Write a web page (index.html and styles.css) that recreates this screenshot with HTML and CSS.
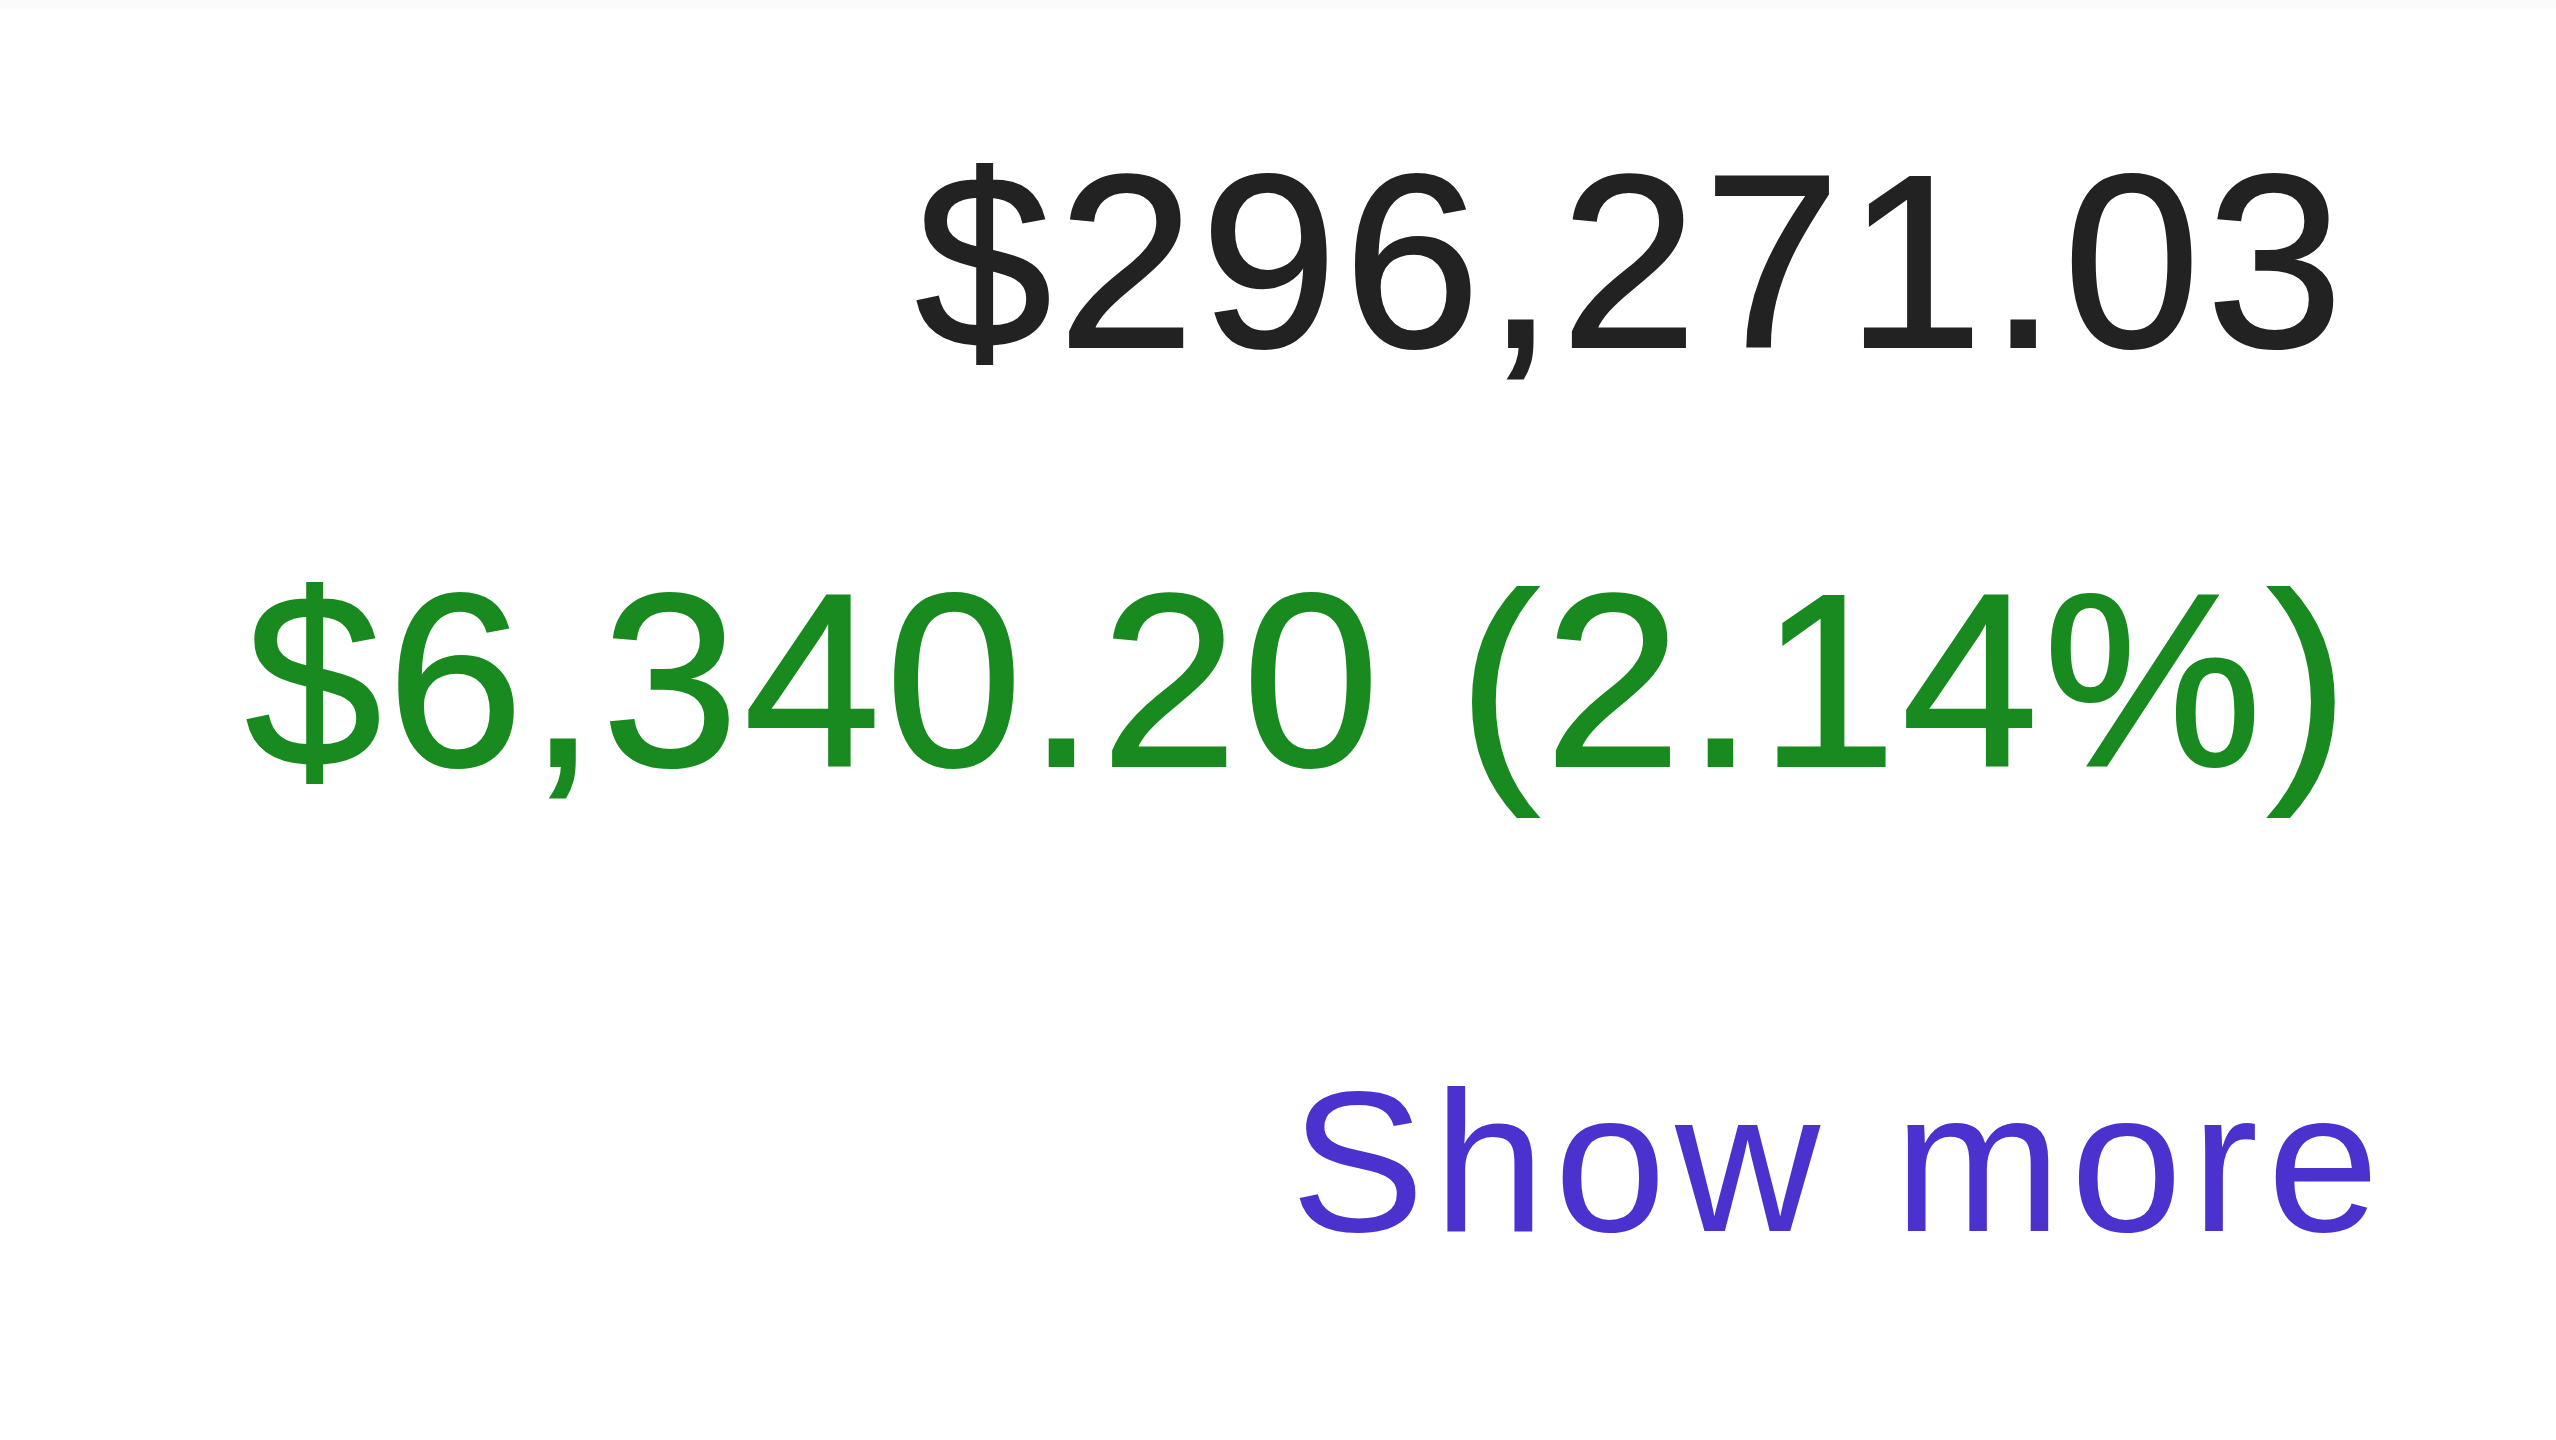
FILE: index.html
```html
<!DOCTYPE html>
<html lang="en">
<head>
<meta charset="utf-8">
<title>Portfolio value</title>
<link rel="stylesheet" href="styles.css">
</head>
<body>
<div class="topbar"></div>
<main class="summary">
  <div class="total">$296,271.03</div>
  <div class="change">$6,340.20 (2.14%)</div>
  <a class="more" href="#">Show more</a>
</main>
</body>
</html>
```
FILE: styles.css
```css
html, body {
  margin: 0;
  padding: 0;
  background: #ffffff;
}
body {
  font-family: "Liberation Sans", Arial, Helvetica, sans-serif;
  width: 2556px;
  height: 1440px;
  overflow: hidden;
}
.topbar {
  height: 9px;
  background: #fbfbfb;
}
.summary {
  display: flex;
  flex-direction: column;
  align-items: flex-end;
  padding-top: 125px;
  padding-right: 207px;
}
.total {
  font-size: 246px;
  line-height: 256px;
  letter-spacing: 6px;
  color: #222222;
  -webkit-text-stroke: 2px #222222;
}
.change {
  margin-top: 163px;
  margin-right: -5px;
  font-size: 246px;
  line-height: 256px;
  letter-spacing: 5px;
  color: #188a1f;
  -webkit-text-stroke: 2px #188a1f;
}
.more {
  margin-top: 249px;
  margin-right: -39px;
  font-size: 201px;
  line-height: 208px;
  letter-spacing: 9px;
  color: #4b32cf;
  text-decoration: none;
}
```
